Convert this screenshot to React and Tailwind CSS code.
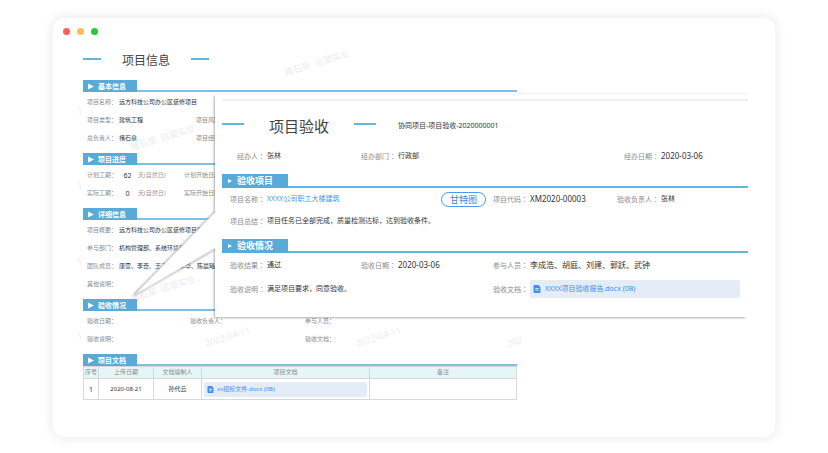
const watermarks = [
  { text: "褚石泉  远望实业", place: "left-[230px] top-[39px]" },
  { text: "褚石泉  远望实业..", place: "left-[76px] top-[113px]" },
  { text: "褚石泉  远望实业..", place: "left-[76px] top-[264px]" },
  { text: "2022-04-11", place: "left-[151px] top-[313px]" },
  { text: "2022-04-11", place: "left-[302px] top-[313px]" },
  { text: "202", place: "left-[454px] top-[318px]" },
  { text: ")", place: "left-[25px] top-[86px]" },
  { text: ")", place: "left-[25px] top-[161px]" },
  { text: ")", place: "left-[25px] top-[237px]" },
  { text: ")", place: "left-[25px] top-[312px]" },
];

const DocIcon = ({ className }) => (
  <svg viewBox="0 0 14 14" className={className} aria-hidden="true">
    <path d="M2 0h7.5L13 3.5V12.500a1.500 1.500 0 0 1-1.500 1.500H2.500A1.500 1.500 0 0 1 1 12.500V1a1 1 0 0 1 1-1Z" fill="#3f8ef0" />
    <path d="M4 5.500h6v2H4zM4 9.500h6v1H4z" fill="#fff" />
  </svg>
);

const Dash = ({ className }) => <span className={`h-0.5 bg-[#63b5de] ${className}`} />;

/* ---- project form (behind) ---- */

const FormTab = ({ title }) => (
  <div className="flex h-3 border-b-2 border-[#7fbfe3]">
    <h2 className="flex h-3 w-[54px] items-center gap-1 bg-[#58aad9] pl-[5px] text-[7px] font-bold text-white">
      <svg viewBox="0 0 6 7" className="h-[7px] w-1.5" aria-hidden="true">
        <path d="M0 0.500 6 3.500 0 6.500Z" fill="#fff" />
      </svg>
      {title}
    </h2>
  </div>
);

const FormSection = ({ title, children }) => (
  <section className="pb-1.5">
    <FormTab title={title} />
    <dl className="pt-px">{children}</dl>
  </section>
);

const FormRow = ({ children }) => (
  <div className="grid h-[18px] grid-cols-[36px_60px_47px_76px_33px_1fr] items-center whitespace-nowrap">
    {children}
  </div>
);

const FormField = ({ label, children }) => (
  <>
    <dt className="flex justify-end text-[#8c8c8c] first:justify-start first:pl-1">{label}：</dt>
    <dd className="text-[#333]">{children}</dd>
  </>
);

const Days = ({ count }) => (
  <span className="flex">
    <span className="w-[17px] text-center text-[7px]">{count}</span>
    <span className="pl-0.5 text-[#999]">天(自然日)</span>
  </span>
);

const ProjectForm = () => (
  <main className="relative text-[6px] leading-[9px]">
    <header className="flex h-6 items-center pt-0.5">
      <Dash className="w-[18px] -mt-1" />
      <h1 className="px-[21px] text-[12px] leading-4 text-[#444]">项目信息</h1>
      <Dash className="w-[18px] -mt-1" />
    </header>

    <div className="pt-2">
      <FormSection title="基本信息">
        <FormRow>
          <FormField label="项目名称">远方科技公司办公区装修项目</FormField>
        </FormRow>
        <FormRow>
          <FormField label="项目类型">建筑工程</FormField>
          <FormField label="项目风险" />
        </FormRow>
        <FormRow>
          <FormField label="总负责人">褚石泉</FormField>
          <FormField label="项目经理" />
        </FormRow>
      </FormSection>

      <FormSection title="项目进度">
        <FormRow>
          <FormField label="计划工期"><Days count={62} /></FormField>
          <FormField label="计划开始日期" />
        </FormRow>
        <FormRow>
          <FormField label="实际工期"><Days count={0} /></FormField>
          <FormField label="实际开始日期" />
        </FormRow>
      </FormSection>

      <FormSection title="详细信息">
        <FormRow>
          <FormField label="项目概要">远方科技公司办公区装修项目概要</FormField>
        </FormRow>
        <FormRow>
          <FormField label="参与部门">机构管理部、系统环境部</FormField>
        </FormRow>
        <FormRow>
          <FormField label="团队成员">康雷、李奇、王子明、李华、陈晨曦</FormField>
        </FormRow>
        <FormRow>
          <FormField label="其他说明" />
        </FormRow>
      </FormSection>

      <FormSection title="验收情况">
        <FormRow>
          <FormField label="验收日期" />
          <FormField label="验收负责人" />
          <FormField label="参与人员" />
        </FormRow>
        <FormRow>
          <FormField label="验收说明" />
          <dt /><dd />
          <FormField label="验收文档" />
        </FormRow>
      </FormSection>

      <FormTab title="项目文档" />
      <table className="w-full table-fixed border-collapse text-center [&_td]:border [&_td]:border-[#d8d8d8] [&_th]:border [&_th]:border-[#d8d8d8]">
        <thead>
          <tr className="h-3 bg-[#e6f6f8] text-[#8c8c8c] [&>th]:p-0 [&>th]:font-normal">
            <th className="w-[15px]">序号</th>
            <th className="w-[55px]">上传日期</th>
            <th className="w-12">文档编制人</th>
            <th className="w-[168px]">项目文档</th>
            <th>备注</th>
          </tr>
        </thead>
        <tbody>
          <tr className="h-[21px] text-[#333] [&>td]:p-0">
            <td className="text-[7px]">1</td>
            <td>2020-08-21</td>
            <td>孙代云</td>
            <td>
              <a href="#doc" className="mx-0.5 flex h-[15px] items-center gap-[3px] rounded-xs bg-[#e4edf7] pl-[3px] text-[#3f8ef0]">
                <DocIcon className="size-[7px]" />
                xx招标文件.docx (0B)
              </a>
            </td>
            <td />
          </tr>
        </tbody>
      </table>
    </div>
  </main>
);

/* ---- acceptance sheet (in front) ---- */

const SheetTab = ({ title }) => (
  <div className="flex h-3.5 border-b-2 border-[#63b5de]">
    <h3 className="flex h-3.5 w-[66px] items-center gap-[5px] bg-[#58aad9] pl-1.5 text-[9px] font-bold text-white">
      <svg viewBox="0 0 4 4" className="size-1" aria-hidden="true">
        <path d="M0 0 4 2 0 4Z" fill="#fff" />
      </svg>
      {title}
    </h3>
  </div>
);

const SheetRow = ({ className, children }) => (
  <dl className={`grid grid-cols-[45px_94px_37px_95px_37px_87px_44px_1fr] items-center whitespace-nowrap ${className}`}>
    {children}
  </dl>
);

const SheetField = ({ label, className = "", children }) => (
  <>
    <dt className="pr-0.5 text-right text-[#8c8c8c]">
      {label}
      <span className="font-['Noto_Sans_CJK_TC',sans-serif]" lang="zh-TW">：</span>
    </dt>
    <dd className={`text-[#333] ${className}`}>{children}</dd>
  </>
);

const AcceptanceSheet = () => (
  <aside className="absolute left-[162px] right-[27px] top-[75px] border-t border-[#f3f3f3] bg-white pb-4 pl-[7px] text-[7px] leading-[10px] shadow-[-2px_2px_2px_-1px_rgba(0,0,0,0.32)]">
    <svg viewBox="0 0 84 88" className="absolute -left-[82px] top-[116px] h-[88px] w-[84px]" aria-hidden="true">
      <defs>
        <filter id="soft" x="-10%" y="-10%" width="120%" height="120%">
          <feGaussianBlur stdDeviation="0.9" />
        </filter>
      </defs>
      <path d="M82 2 1 85 82 39" fill="none" stroke="#b4b4b4" strokeWidth="2" filter="url(#soft)" />
      <path d="M84 1 82 2.500 2 84.500 82 38 84 38Z" fill="#fff" />
    </svg>

    <div className="mt-[5px] h-0.5 bg-[#f1f1f1]" />
    <header className="flex h-11 items-center pt-1.5">
      <Dash className="w-[22px] -mt-1" />
      <h2 className="px-[25px] text-[15px] leading-5 text-[#444]">项目验收</h2>
      <Dash className="w-[22px] -mt-1" />
      <p className="pl-[22px] text-[#333]">协同项目-项目验收-2020000001</p>
    </header>
    <SheetRow className="mb-[7px] h-[22px]">
      <SheetField label="经办人">张林</SheetField>
      <SheetField label="经办部门">行政部</SheetField>
      <dt /><dd />
      <SheetField label="经办日期" className="text-[8px]">2020-03-06</SheetField>
    </SheetRow>

    <SheetTab title="验收项目" />
    <SheetRow className="h-[22px]">
      <SheetField label="项目名称">
        <a href="#project" className="text-[#3f9ae8]">XXXX公司职工大楼建筑</a>
      </SheetField>
      <dt />
      <dd className="flex justify-end pr-[7px]">
        <button type="button" className="h-[15px] w-[45px] rounded-full border border-[#4a98ea] bg-white text-[9px] leading-[13px] text-[#2f86e6]">
          甘特图
        </button>
      </dd>
      <SheetField label="项目代码" className="text-[8px]">XM2020-00003</SheetField>
      <SheetField label="验收负责人">张林</SheetField>
    </SheetRow>
    <SheetRow className="mb-[7px] h-[22px]">
      <SheetField label="项目总结">项目任务已全部完成，质量检测达标，达到验收条件。</SheetField>
    </SheetRow>

    <SheetTab title="验收情况" />
    <SheetRow className="h-6">
      <SheetField label="验收结果">通过</SheetField>
      <SheetField label="验收日期" className="text-[8px]">2020-03-06</SheetField>
      <SheetField label="参与人员" className="text-[8px]">李成浩、胡庭、刘建、郭跃、武钟</SheetField>
    </SheetRow>
    <SheetRow className="h-6">
      <SheetField label="验收说明">满足项目要求，同意验收。</SheetField>
      <dt /><dd />
      <SheetField label="验收文档" className="col-span-3 pr-2">
        <a href="#report" className="flex h-[18px] items-center gap-1 rounded-xs bg-[#e4edf7] pl-[3px] text-[#3f8ef0]">
          <DocIcon className="size-2" />
          XXXX项目验收报告.docx (0B)
        </a>
      </SheetField>
    </SheetRow>
  </aside>
);

export default function App() {
  return (
    <div className="bg-white px-[52px] pt-[17px] pb-4 font-['Noto_Sans','Noto_Sans_CJK_SC',sans-serif]" lang="zh-CN">
      <div className="relative rounded-xl border border-[#f6f6f6] bg-white pb-[37px] pl-[30px] pr-[258px] shadow-[0_0_12px_rgba(0,0,0,0.09)]">
        <div className="-ml-5 flex gap-[7px] pt-2.5 pb-[13px]">
          <span className="size-[7px] rounded-full bg-[#ff5f57]" />
          <span className="size-[7px] rounded-full bg-[#fdbc57]" />
          <span className="size-[7px] rounded-full bg-[#28c840]" />
        </div>
        <div className="text-[9px] leading-3 text-[#ececec]" aria-hidden="true">
          {watermarks.map((mark, i) => (
            <span key={i} className={`absolute -rotate-17 whitespace-pre ${mark.place}`}>
              {mark.text}
            </span>
          ))}
        </div>
        <ProjectForm />
        <AcceptanceSheet />
      </div>
    </div>
  );
}
